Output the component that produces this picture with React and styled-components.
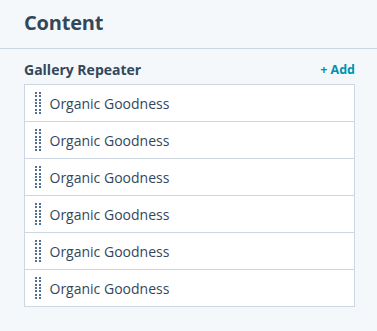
import React from "react";
import styled, { createGlobalStyle } from "styled-components";

const Global = createGlobalStyle`
  html, body {
    margin: 0;
    background: #f5f8fa;
    font-family: "Open Sans", "Lato", sans-serif;
    color: #33475b;
  }
`;

const Page = styled.div`
  width: 377px;
  min-height: 331px;
  background: #f5f8fa;
`;

const Header = styled.header`
  height: 48px;
  padding: 0 24px;
  display: flex;
  align-items: center;
  border-bottom: 1px solid #cbd6e2;
  h1 {
    margin: 0 0 4px;
    font-size: 20px;
    letter-spacing: -0.2px;
    font-weight: 700;
    color: #33475b;
  }
`;

const Section = styled.section`
  padding: 8px 22px 0 24px;
`;

const SectionTop = styled.div`
  display: flex;
  align-items: center;
  justify-content: space-between;
  height: 24px;
  margin-bottom: 3px;
  h2 {
    margin: 0;
    font-size: 14px;
    font-weight: 700;
  }
`;

const AddButton = styled.button`
  border: none;
  background: none;
  padding: 0;
  font-family: inherit;
  font-size: 12.5px;
  font-weight: 700;
  color: #0091ae;
  cursor: pointer;
`;

const List = styled.ul`
  list-style: none;
  margin: 0;
  padding: 0;
  border: 1px solid #cbd6e2;
  background: #fff;
`;

const Row = styled.li`
  height: 36px;
  display: flex;
  align-items: center;
  gap: 9px;
  padding-left: 10px;
  font-size: 14px;
  color: #33475b;
  & + & {
    border-top: 1px solid #cbd6e2;
  }
`;

const Handle = styled.span`
  display: grid;
  grid-template-columns: 2px 2px;
  grid-auto-rows: 2px;
  column-gap: 1.5px;
  row-gap: 1.3px;
  span {
    background: #516f90;
  }
`;

function DragHandle() {
  return (
    <Handle>
      {Array.from({ length: 14 }).map((_, i) => (
        <span key={i} />
      ))}
    </Handle>
  );
}

const items = Array(6).fill("Organic Goodness");

export default function App() {
  return (
    <Page>
      <Global />
      <Header>
        <h1>Content</h1>
      </Header>
      <Section>
        <SectionTop>
          <h2>Gallery Repeater</h2>
          <AddButton>+ Add</AddButton>
        </SectionTop>
        <List>
          {items.map((label, i) => (
            <Row key={i}>
              <DragHandle />
              {label}
            </Row>
          ))}
        </List>
      </Section>
    </Page>
  );
}
